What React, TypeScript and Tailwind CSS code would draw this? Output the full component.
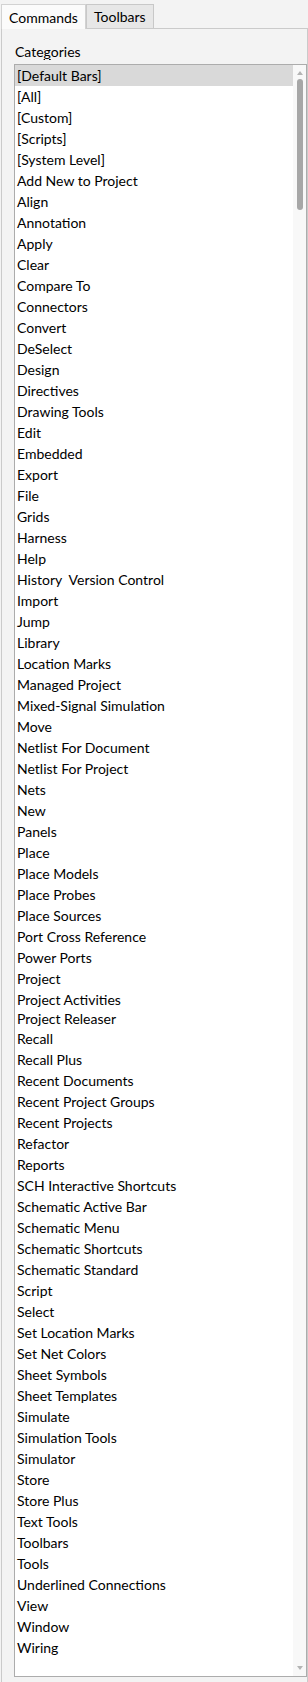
import React from "react";

const items: string[] = [
  "[Default Bars]",
  "[All]",
  "[Custom]",
  "[Scripts]",
  "[System Level]",
  "Add New to Project",
  "Align",
  "Annotation",
  "Apply",
  "Clear",
  "Compare To",
  "Connectors",
  "Convert",
  "DeSelect",
  "Design",
  "Directives",
  "Drawing Tools",
  "Edit",
  "Embedded",
  "Export",
  "File",
  "Grids",
  "Harness",
  "Help",
  "History  Version Control",
  "Import",
  "Jump",
  "Library",
  "Location Marks",
  "Managed Project",
  "Mixed-Signal Simulation",
  "Move",
  "Netlist For Document",
  "Netlist For Project",
  "Nets",
  "New",
  "Panels",
  "Place",
  "Place Models",
  "Place Probes",
  "Place Sources",
  "Port Cross Reference",
  "Power Ports",
  "Project",
  "Project Activities",
  "Project Releaser",
  "Recall",
  "Recall Plus",
  "Recent Documents",
  "Recent Project Groups",
  "Recent Projects",
  "Refactor",
  "Reports",
  "SCH Interactive Shortcuts",
  "Schematic Active Bar",
  "Schematic Menu",
  "Schematic Shortcuts",
  "Schematic Standard",
  "Script",
  "Select",
  "Set Location Marks",
  "Set Net Colors",
  "Sheet Symbols",
  "Sheet Templates",
  "Simulate",
  "Simulation Tools",
  "Simulator",
  "Store",
  "Store Plus",
  "Text Tools",
  "Toolbars",
  "Tools",
  "Underlined Connections",
  "View",
  "Window",
  "Wiring",
];

export default function App() {
  return (
    <div
      className="w-[308px] h-[1682px] bg-[#f3f3f3] overflow-hidden text-black text-[14px]"
      style={{ fontFamily: 'Lato, "Noto Sans", sans-serif' }}
    >
      {/* Tab strip */}
      <div className="flex items-end h-[28px] pl-[1px] pt-[4px]">
        <div className="relative z-10 w-[85px] h-[25px] -mb-[1px] bg-[#fbfbfb] border border-b-0 border-[#d2d2d2] flex items-center pl-[7px] leading-[21px] whitespace-nowrap">
          Commands
        </div>
        <div className="w-[68px] h-[24px] bg-[#e7e7e7] border border-b-0 border-[#c8c8c8] flex items-center pl-[7px] leading-[21px] whitespace-nowrap">
          Toolbars
        </div>
      </div>

      {/* Panel */}
      <div className="ml-[1px] w-[307px] h-[1654px] border-t border-l border-r border-[#cacaca] bg-[#f3f3f3] pl-[12px] pt-[12px]">
        <div className="h-[21px] leading-[21px] pl-[1px] mb-[2px]">
          Cate<span className="underline underline-offset-2">g</span>ories
        </div>

        {/* List box */}
        <div className="w-[293px] h-[1613px] border border-[#acacac] bg-white flex">
          <div className="flex-1 flex flex-col">
            {items.map((name, i) => (
              <div
                key={name}
                className={
                  (name === "Project Releaser"
                    ? "h-[18px] leading-[18px] "
                    : "h-[21px] leading-[21px] ") +
                  (i === 0 ? "bg-[#d9d9d9] " : "") +
                  "pl-[2px] whitespace-pre"
                }
              >
                {name}
              </div>
            ))}
          </div>

          {/* Scrollbar */}
          <div className="w-[13px] bg-[#f8f8f8] flex flex-col items-center">
            <svg width="6" height="4" viewBox="0 0 6 4" className="mt-[6px]">
              <path d="M0 4 L3 0 L6 4 Z" fill="#b4b4b4" />
            </svg>
            <div className="mt-[4px] w-[6px] h-[131px] rounded-full bg-[#a7a7a7]" />
            <div className="flex-1" />
            <svg width="6" height="4" viewBox="0 0 6 4" className="mb-[6px]">
              <path d="M0 0 L6 0 L3 4 Z" fill="#b4b4b4" />
            </svg>
          </div>
        </div>
      </div>
    </div>
  );
}
